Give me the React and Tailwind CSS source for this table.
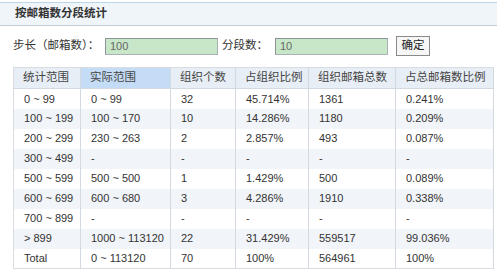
const rows = [
  ['0 ~ 99', '0 ~ 99', '32', '45.714%', '1361', '0.241%'],
  ['100 ~ 199', '100 ~ 170', '10', '14.286%', '1180', '0.209%'],
  ['200 ~ 299', '230 ~ 263', '2', '2.857%', '493', '0.087%'],
  ['300 ~ 499', '-', '-', '-', '-', '-'],
  ['500 ~ 599', '500 ~ 500', '1', '1.429%', '500', '0.089%'],
  ['600 ~ 699', '600 ~ 680', '3', '4.286%', '1910', '0.338%'],
  ['700 ~ 899', '-', '-', '-', '-', '-'],
  ['> 899', '1000 ~ 113120', '22', '31.429%', '559517', '99.036%'],
  ['Total', '0 ~ 113120', '70', '100%', '564961', '100%'],
]

const headers = ['统计范围', '实际范围', '组织个数', '占组织比例', '组织邮箱总数', '占总邮箱数比例']
const widths = ['w-[67px]', 'w-[90px]', 'w-[65px]', 'w-[73px]', 'w-[87px]', 'w-[98px]']

export default function App() {
  return (
    <div className="w-[497px] h-[273px] bg-white overflow-hidden text-[#333] font-['Liberation_Sans','Noto_Sans_CJK_SC',sans-serif]">
      {/* Title bar */}
      <div className="mt-[2px] h-[24px] border-t border-b border-t-[#bcd6e9] border-b-[#c5ccd3] bg-[#f0f5fa] flex items-center pl-[15px]">
        <span className="text-[11.5px] font-bold text-[#333]">按邮箱数分段统计</span>
      </div>

      {/* Form */}
      <div className="mt-[10px] h-[20px] flex items-center pl-[13px] text-[11.5px]">
        <span className="w-[92px] whitespace-nowrap">步长（邮箱数）：</span>
        <div className="w-[113px] h-[17px] border border-[#a9b0b6] border-t-[#8c9399] border-l-[#8c9399] bg-[#c8e7c8] text-[11px] text-[#666] pl-[4px] flex items-center">100</div>
        <span className="ml-[4px] w-[53px] whitespace-nowrap">分段数：</span>
        <div className="w-[113px] h-[17px] border border-[#a9b0b6] border-t-[#8c9399] border-l-[#8c9399] bg-[#c8e7c8] text-[11px] text-[#666] pl-[4px] flex items-center">10</div>
        <div className="ml-[8px] w-[34px] h-[20px] border border-[#8a8a8a] bg-[#f6f6f6] flex items-center justify-center text-[11.5px] text-[#222]">确定</div>
      </div>

      {/* Table */}
      <table className="mt-[11px] ml-[13px] w-[480px] table-fixed border-collapse border border-[#d9dde2]">
        <thead>
          <tr className="h-[21px] bg-[#e8eef5]">
            {headers.map((h, i) => (
              <th
                key={h}
                className={`${widths[i]} ${i === 1 ? 'bg-[#c4dcf5]' : ''} border-r border-b border-[#d3d9e0] pl-[9px] text-left font-normal text-[11.5px] text-[#444]`}
              >
                {h}
              </th>
            ))}
          </tr>
        </thead>
        <tbody>
          {rows.map((r, ri) => (
            <tr key={ri} className={`h-[20px] ${ri % 2 === 1 ? 'bg-[#f1f4f8]' : 'bg-white'}`}>
              {r.map((c, ci) => (
                <td key={ci} className="border-r border-[#d3d9e0] pl-[10px] text-[11px] whitespace-nowrap p-0">
                  {c}
                </td>
              ))}
            </tr>
          ))}
        </tbody>
      </table>
    </div>
  )
}
